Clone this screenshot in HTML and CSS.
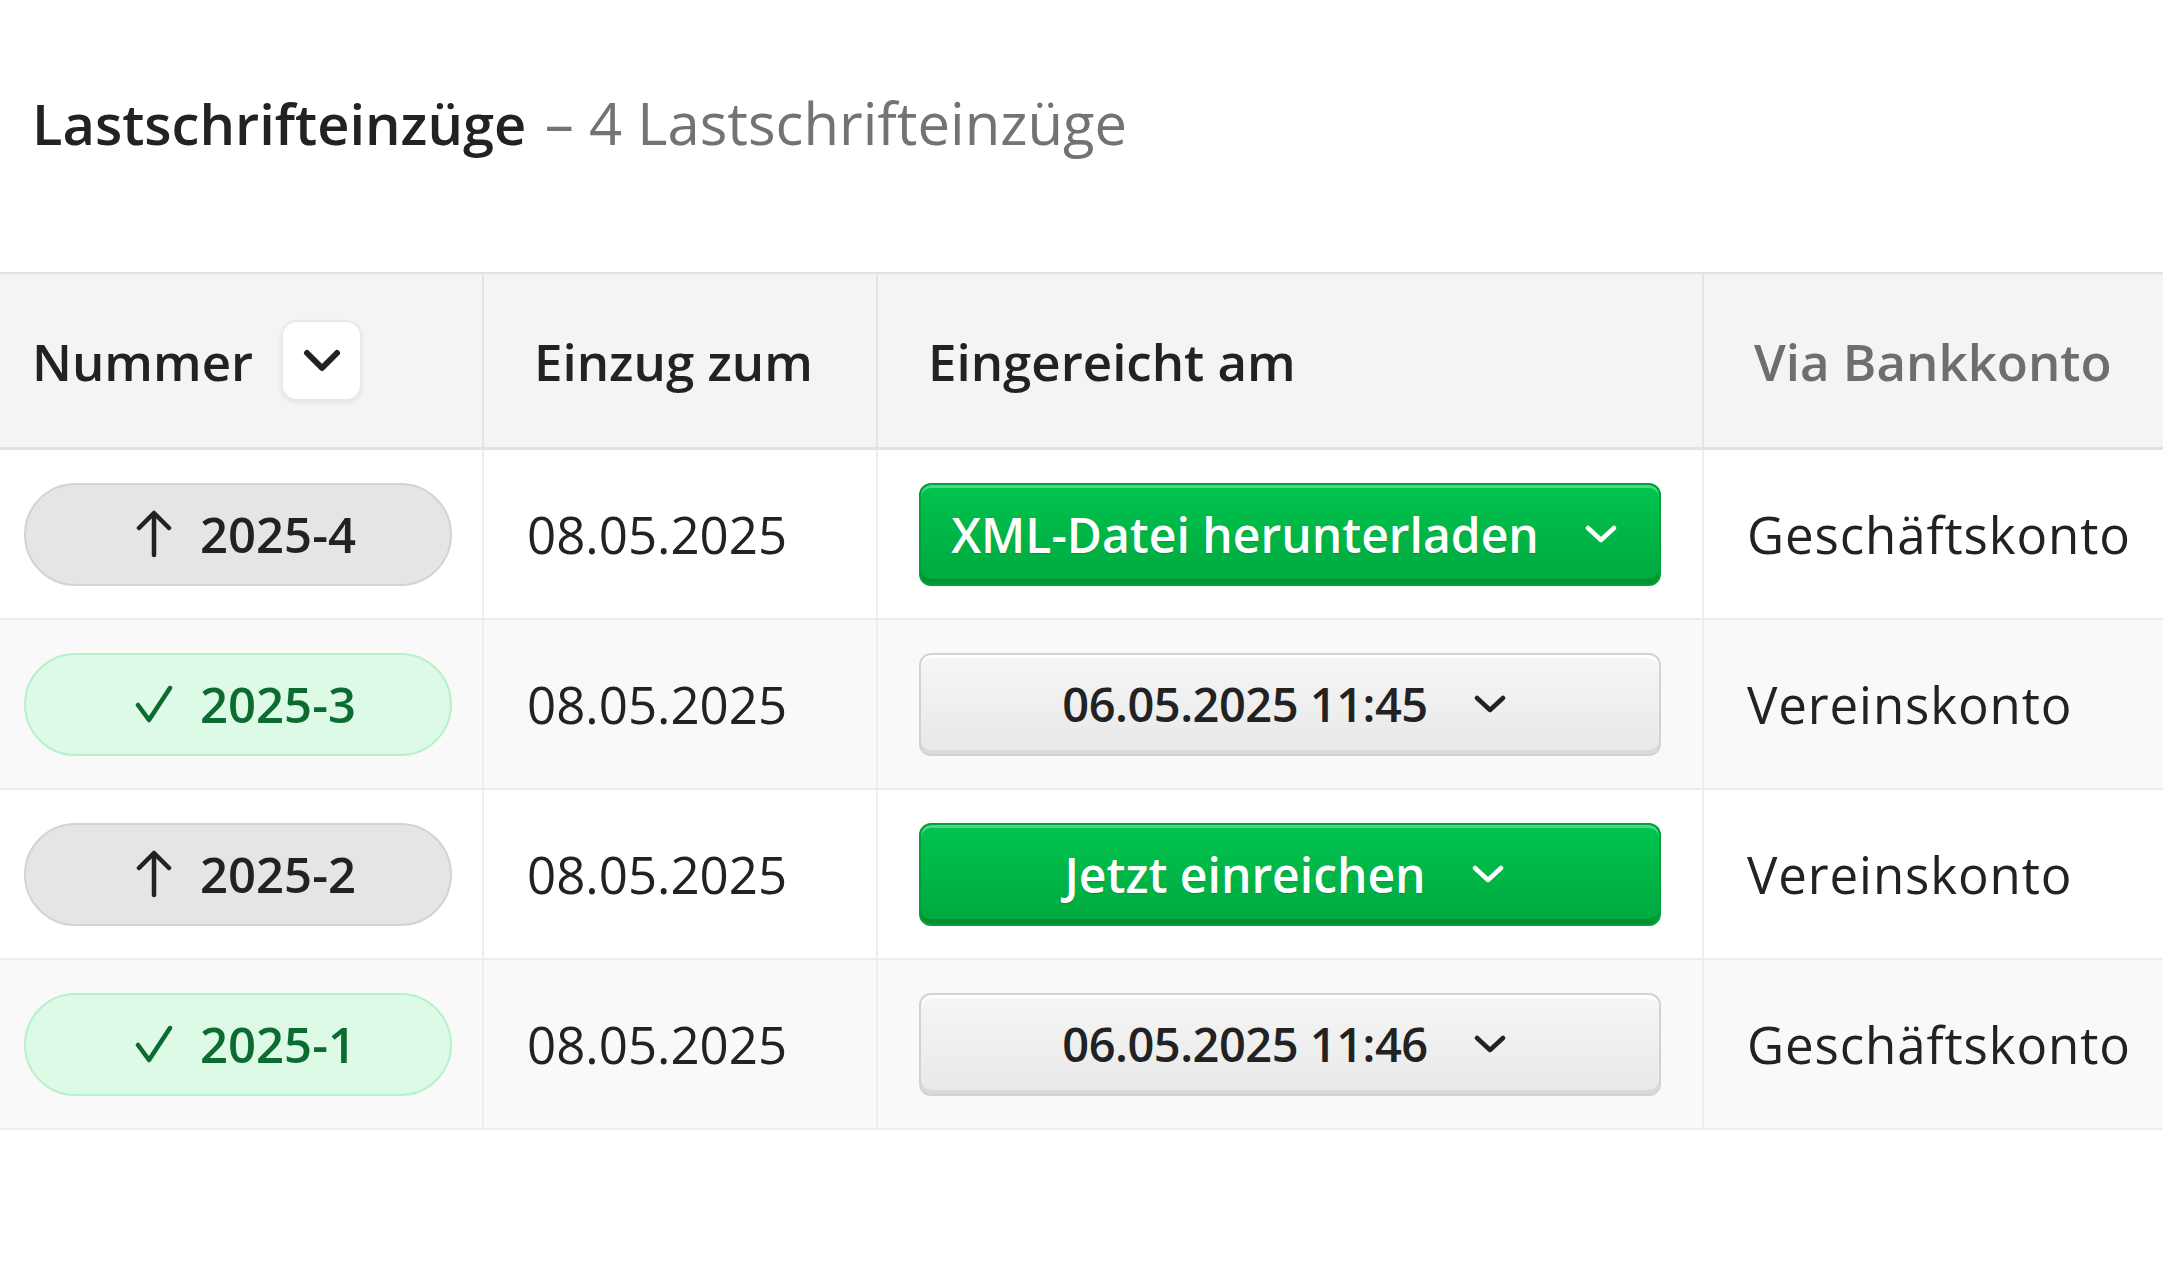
FILE: index.html
```html
<!DOCTYPE html>
<html lang="de">
<head>
    <meta charset="UTF-8">
    <meta name="viewport" content="width=device-width, initial-scale=1.0">
    <title>Lastschrifteinzüge</title>
    <link rel="stylesheet" href="styles.css">
</head>
<body>
    <h1 class="title">Lastschrifteinzüge <span class="title_count">– 4 Lastschrifteinzüge</span></h1>

    <table class="list">
        <colgroup>
            <col class="w_nr">
            <col class="w_due">
            <col class="w_sent">
            <col>
        </colgroup>
        <thead>
            <tr>
                <th class="col_nr">
                    <div class="th_sort">
                        Nummer
                        <span class="sort_btn">
                            <svg width="40" height="24" viewBox="0 0 40 24"><path d="M5 4 L20 19 L35 4" fill="none" stroke="#222" stroke-width="6" stroke-linecap="round" stroke-linejoin="round"/></svg>
                        </span>
                    </div>
                </th>
                <th>Einzug zum</th>
                <th>Eingereicht am</th>
                <th class="muted">Via Bankkonto</th>
            </tr>
        </thead>
        <tbody>
            <!-- 2025-4: noch nicht eingereicht -->
            <tr>
                <td class="col_nr">
                    <span class="nr">
                        <svg width="40" height="48" viewBox="0 0 40 48"><path d="M20 45 V4 M5 18 L20 3 L35 18" fill="none" stroke="#222" stroke-width="4.5" stroke-linecap="round" stroke-linejoin="round"/></svg>
                        2025-4
                    </span>
                </td>
                <td>08.05.2025</td>
                <td class="col_sent">
                    <a class="btn btn_green" href="javascript:;">
                        XML-Datei herunterladen
                        <svg width="32" height="18" viewBox="0 0 32 18"><path d="M3 3 L16 15 L29 3" fill="none" stroke="#fff" stroke-width="4.5" stroke-linecap="round" stroke-linejoin="round"/></svg>
                    </a>
                </td>
                <td class="col_acc">Geschäftskonto</td>
            </tr>
            <tr>
                <td class="col_nr">
                    <span class="nr done">
                        <svg width="40" height="38" viewBox="0 0 40 38"><path d="M4 20 L15 35 L36 3" fill="none" stroke="#0b6b30" stroke-width="4.5" stroke-linecap="round" stroke-linejoin="round"/></svg>
                        2025-3
                    </span>
                </td>
                <td>08.05.2025</td>
                <td class="col_sent">
                    <a class="btn btn_grey" href="javascript:;">
                        06.05.2025 11:45
                        <svg width="32" height="18" viewBox="0 0 32 18"><path d="M3 3 L16 15 L29 3" fill="none" stroke="#222" stroke-width="4.5" stroke-linecap="round" stroke-linejoin="round"/></svg>
                    </a>
                </td>
                <td class="col_acc">Vereinskonto</td>
            </tr>
            <tr>
                <td class="col_nr">
                    <span class="nr">
                        <svg width="40" height="48" viewBox="0 0 40 48"><path d="M20 45 V4 M5 18 L20 3 L35 18" fill="none" stroke="#222" stroke-width="4.5" stroke-linecap="round" stroke-linejoin="round"/></svg>
                        2025-2
                    </span>
                </td>
                <td>08.05.2025</td>
                <td class="col_sent">
                    <a class="btn btn_green" href="javascript:;">
                        Jetzt einreichen
                        <svg width="32" height="18" viewBox="0 0 32 18"><path d="M3 3 L16 15 L29 3" fill="none" stroke="#fff" stroke-width="4.5" stroke-linecap="round" stroke-linejoin="round"/></svg>
                    </a>
                </td>
                <td class="col_acc">Vereinskonto</td>
            </tr>
            <tr>
                <td class="col_nr">
                    <span class="nr done">
                        <svg width="40" height="38" viewBox="0 0 40 38"><path d="M4 20 L15 35 L36 3" fill="none" stroke="#0b6b30" stroke-width="4.5" stroke-linecap="round" stroke-linejoin="round"/></svg>
                        2025-1
                    </span>
                </td>
                <td>08.05.2025</td>
                <td class="col_sent">
                    <a class="btn btn_grey" href="javascript:;">
                        06.05.2025 11:46
                        <svg width="32" height="18" viewBox="0 0 32 18"><path d="M3 3 L16 15 L29 3" fill="none" stroke="#222" stroke-width="4.5" stroke-linecap="round" stroke-linejoin="round"/></svg>
                    </a>
                </td>
                <td class="col_acc">Geschäftskonto</td>
            </tr>
        </tbody>
    </table>
</body>
</html>
```

FILE: styles.css
```css
*{
    margin: 0;
    padding: 0;
}
body{
    font-family: "Open Sans", "Noto Sans", sans-serif;
    color: #222;
    background-color: #fff;
    overflow: hidden;
}
.title{
    padding: 90px 0 0 32px;
    font-size: 56px;
    font-weight: 600;
    line-height: 66px;
    white-space: nowrap;
}
.title_count{
    margin-left: 4px;
    font-size: 58px;
    font-weight: 400;
    color: #737373;
}

/* Tabelle */
.list{
    margin-top: 116px;
    width: 100%;
    border-collapse: collapse;
    table-layout: fixed;
}
.w_nr{
    width: 483px;
}
.w_due{
    width: 394px;
}
.w_sent{
    width: 826px;
}
.list th{
    height: 173px;
    padding: 0 0 0 50px;
    background-color: #f4f4f4;
    border-top: 2px solid #e2e2e2;
    border-bottom: 3px solid #e2e2e2;
    border-left: 2px solid #e4e4e4;
    text-align: left;
    font-size: 51px;
    font-weight: 600;
    white-space: nowrap;
}
.list th.col_nr{
    padding-left: 32px;
    border-left: 0;
}
.list th.muted{
    color: #6e6e6e;
}
.th_sort{
    display: flex;
    align-items: center;
    gap: 28px;
}
.sort_btn{
    display: flex;
    align-items: center;
    justify-content: center;
    width: 81px;
    height: 81px;
    box-sizing: border-box;
    background-color: #fff;
    border: 2px solid #e9e9e9;
    border-radius: 16px;
    box-shadow: 0 2px 4px rgba(0,0,0,.07);
}
.list td{
    height: 168px;
    padding: 0 0 0 43px;
    border-bottom: 2px solid #ededed;
    border-left: 2px solid #ededed;
    font-size: 51px;
    white-space: nowrap;
}
.list td.col_nr{
    padding-left: 24px;
    border-left: 0;
}
.list td.col_sent{
    padding-left: 41px;
}
.list td.col_acc{
    letter-spacing: 0.9px;
}
.list tbody tr:nth-child(even) td{
    background-color: #f9f9f9;
}

/* Nummer-Pille */
.nr{
    display: flex;
    align-items: center;
    justify-content: center;
    gap: 26px;
    width: 428px;
    height: 103px;
    box-sizing: border-box;
    padding-left: 14px;
    border: 2px solid #d3d3d3;
    border-radius: 52px;
    background-color: #e5e5e5;
    font-size: 49px;
    font-weight: 600;
}
.nr.done{
    background-color: #dcfae5;
    border-color: #b7f0ca;
    color: #0b6b30;
}

/* Buttons */
.btn{
    display: flex;
    align-items: center;
    justify-content: center;
    gap: 46px;
    width: 742px;
    height: 103px;
    box-sizing: border-box;
    padding-right: 12px;
    border-radius: 12px;
    font-size: 48px;
    font-weight: 600;
    text-decoration: none;
}
.btn_green{
    color: #fff;
    background: linear-gradient(#00c44f, #00a83f);
    border: 2px solid #00a13a;
    box-shadow: inset 0 3px 0 rgba(255,255,255,.3), inset 0 -5px 0 #00932f;
    text-shadow: 0 1px 1px rgba(0,0,0,.15);
}
.btn_grey{
    color: #222;
    font-size: 47px;
    letter-spacing: -0.5px;
    background: linear-gradient(#f6f6f6, #e8e8e8);
    border: 2px solid #d2d2d2;
    box-shadow: inset 0 3px 0 #fff, inset 0 -4px 0 #dadada;
}
```
